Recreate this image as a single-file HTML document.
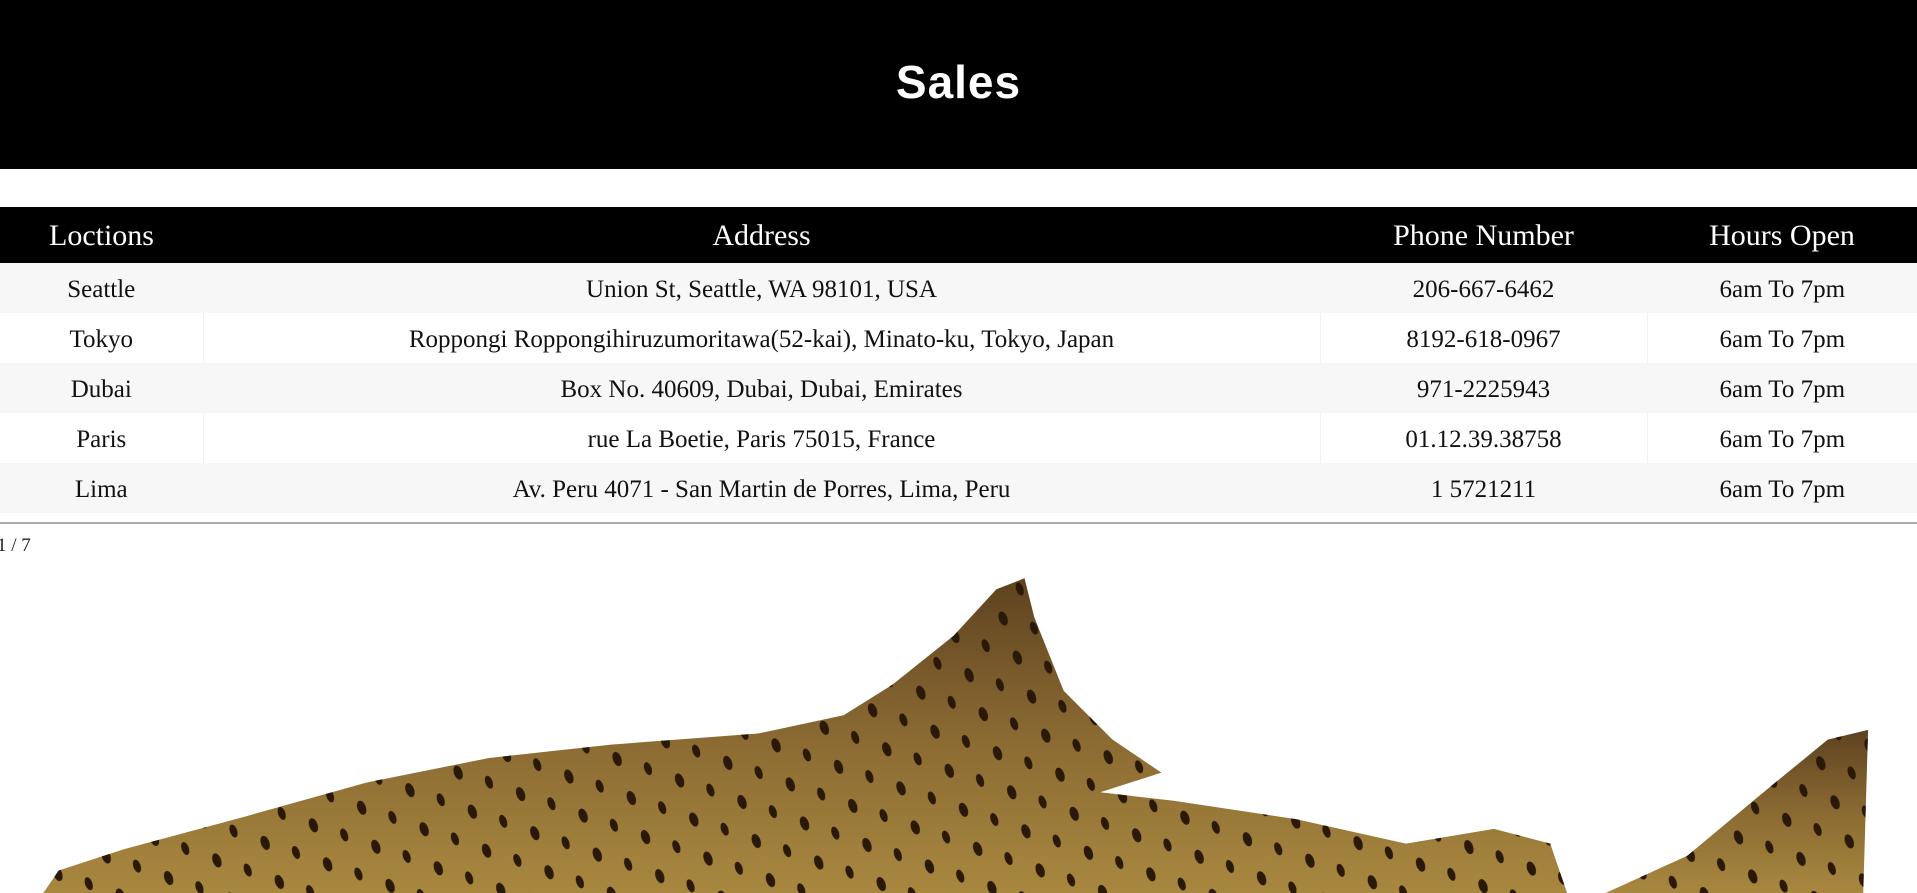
<!DOCTYPE html>
<html><head><meta charset="utf-8"><style>
html,body{margin:0;padding:0;background:#fff;width:1917px;height:893px;overflow:hidden;position:relative;font-family:"Liberation Serif",serif;}
.hdr{position:absolute;left:0;top:0;width:1917px;height:169px;background:#000;}
.hdr h1{margin:0;position:absolute;left:0;right:0;top:57px;text-align:center;color:#fff;font-family:"Liberation Sans",sans-serif;font-weight:bold;font-size:46px;line-height:50px;letter-spacing:1px;}
table{position:absolute;left:0;top:207px;width:1917px;border-collapse:collapse;}
th{background:#000;color:#fff;font-weight:normal;font-size:30px;height:56px;padding:2px 0 0 0;text-align:center;box-sizing:border-box;}
td{font-size:25px;height:50px;padding:3px 0 0 0;text-align:center;color:#111;border-left:1px solid #f2f2f2;box-sizing:border-box;}
td:first-child{border-left:none;}
tr:nth-child(odd) td{background:#f7f7f7;border-left-color:#f7f7f7;}
.line{position:absolute;left:0;top:522px;width:1917px;height:2px;background:#aaa;}
.pg{position:absolute;left:-3px;top:535px;font-size:19px;color:#222;}
svg{position:absolute;left:0;top:0;}
</style></head><body>
<div class="hdr"><h1>Sales</h1></div>
<table>
<colgroup><col style="width:203px"><col style="width:1117px"><col style="width:327px"><col style="width:270px"></colgroup>
<thead><tr><th>Loctions</th><th>Address</th><th>Phone Number</th><th>Hours Open</th></tr></thead>
<tbody>
<tr><td>Seattle</td><td>Union St, Seattle, WA 98101, USA</td><td>206-667-6462</td><td>6am To 7pm</td></tr>
<tr><td>Tokyo</td><td>Roppongi Roppongihiruzumoritawa(52-kai), Minato-ku, Tokyo, Japan</td><td>8192-618-0967</td><td>6am To 7pm</td></tr>
<tr><td>Dubai</td><td>Box No. 40609, Dubai, Dubai, Emirates</td><td>971-2225943</td><td>6am To 7pm</td></tr>
<tr><td>Paris</td><td>rue La Boetie, Paris 75015, France</td><td>01.12.39.38758</td><td>6am To 7pm</td></tr>
<tr><td>Lima</td><td>Av. Peru 4071 - San Martin de Porres, Lima, Peru</td><td>1 5721211</td><td>6am To 7pm</td></tr>
</tbody></table>
<div class="line"></div>
<div class="pg">1 / 7</div>
<svg width="1917" height="893" viewBox="0 0 1568 730.4">
<defs>
<linearGradient id="g" x1="0" y1="0" x2="0" y2="1">
<stop offset="0" stop-color="#5e4220"/><stop offset="0.5" stop-color="#8a6a32"/><stop offset="1" stop-color="#a8883f"/>
</linearGradient>
<pattern id="sp" width="42" height="34" patternUnits="userSpaceOnUse" patternTransform="rotate(-20)">
<ellipse cx="10" cy="8" rx="3.5" ry="6" fill="#2a1808"/>
<ellipse cx="31" cy="24" rx="3" ry="5.5" fill="#2a1808"/>
</pattern>
</defs>
<g>
<path d="M35,731 L48,712 L100,695 L200,668 L300,640 L400,620 L500,609 L620,600 L690,585 L730,560 L780,520 L815,482 L838,473 L846,505 L870,565 L910,605 L950,632 L900,648 L960,655 L1060,670 L1150,690 L1222,678 L1268,690 L1282,731 Z" fill="url(#g)"/>
<path d="M35,731 L48,712 L100,695 L200,668 L300,640 L400,620 L500,609 L620,600 L690,585 L730,560 L780,520 L815,482 L838,473 L846,505 L870,565 L910,605 L950,632 L900,648 L960,655 L1060,670 L1150,690 L1222,678 L1268,690 L1282,731 Z" fill="url(#sp)"/>
<path d="M1312,731 L1380,700 L1440,650 L1495,605 L1528,597 L1524,731 Z" fill="url(#g)"/>
<path d="M1312,731 L1380,700 L1440,650 L1495,605 L1528,597 L1524,731 Z" fill="url(#sp)"/>
</g>
</svg>
</body></html>
